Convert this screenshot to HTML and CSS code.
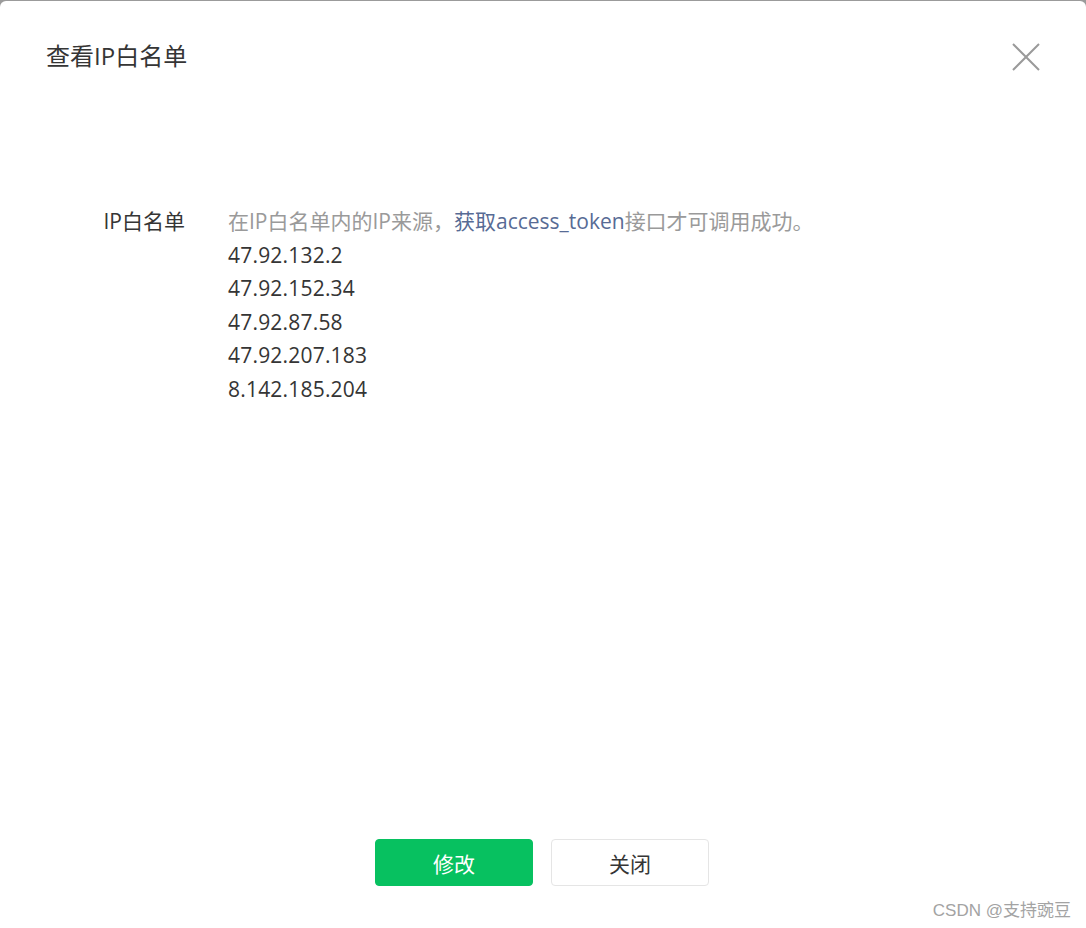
FILE: index.html
```html
<!DOCTYPE html>
<html lang="zh-CN">
<head>
<meta charset="utf-8">
<title>查看IP白名单</title>
<link rel="stylesheet" href="styles.css">
</head>
<body>
<div class="backdrop">
  <div class="dialog">
    <div class="header">
      <h3 class="title">查看IP白名单</h3>
      <button class="close" aria-label="关闭">
        <svg width="28" height="28" viewBox="0 0 28 28"><path d="M1 1L27 27M27 1L1 27" stroke="#9a9a9a" stroke-width="2" fill="none"/></svg>
      </button>
    </div>
    <div class="body">
      <div class="row">
        <div class="label">IP白名单</div>
        <div class="value">
          <p class="hint">在IP白名单内的IP来源，<a class="link" href="#">获取access_token</a>接口才可调用成功。</p>
          <p class="ip">47.92.132.2</p>
          <p class="ip">47.92.152.34</p>
          <p class="ip">47.92.87.58</p>
          <p class="ip">47.92.207.183</p>
          <p class="ip">8.142.185.204</p>
        </div>
      </div>
    </div>
    <div class="footer">
      <button class="btn btn-primary">修改</button>
      <button class="btn btn-default">关闭</button>
    </div>
  </div>
  <div class="watermark">CSDN @支持豌豆</div>
</div>
</body>
</html>
```

FILE: styles.css
```css
* { box-sizing: border-box; }
html, body { margin: 0; padding: 0; }
body {
  width: 1086px;
  height: 928px;
  overflow: hidden;
  background: #9b9b9b;
  font-family: "Open Sans", "Noto Sans CJK SC", sans-serif;
  color: #353535;
}
.backdrop {
  position: relative;
  height: 928px;
  padding-top: 1px;
}
.dialog {
  height: 927px;
  background: #fff;
  border-radius: 6px 6px 0 0;
  display: flex;
  flex-direction: column;
}
.header {
  display: flex;
  align-items: flex-start;
  justify-content: space-between;
  padding: 38px 46px 0 46px;
  height: 150px;
}
.title {
  margin: 0;
  font-size: 24px;
  font-weight: 400;
  line-height: 34px;
  color: #353535;
}
.close {
  border: 0;
  background: transparent;
  padding: 0;
  margin: 4px 0 0 0;
  width: 28px;
  height: 28px;
  cursor: pointer;
  display: block;
}
.close svg { display: block; }
.body {
  flex: 1;
  padding-top: 54px;
}
.row {
  display: flex;
  gap: 43px;
  font-size: 21px;
  line-height: 33.6px;
}
.label {
  width: 185px;
  text-align: right;
  color: #353535;
}
.value p { margin: 0; }
.hint { color: #9a9a9a; }
.link { color: #576b95; text-decoration: none; }
.ip { color: #353535; letter-spacing: 0.2px; }
.footer {
  display: flex;
  justify-content: center;
  gap: 18px;
  padding: 0 2px 42px 0;
}
.btn {
  width: 158px;
  height: 47px;
  border-radius: 4px;
  font-family: "Open Sans", "Noto Sans CJK SC", sans-serif;
  font-size: 21px;
  cursor: pointer;
  padding: 0;
}
.btn-primary {
  background: #07c160;
  border: 1px solid #07c160;
  color: #fff;
}
.btn-default {
  background: #fff;
  border: 1px solid #e5e5e5;
  color: #353535;
}
.watermark {
  position: absolute;
  right: 15px;
  bottom: 7px;
  font-family: "Liberation Sans", "Noto Sans CJK SC", sans-serif;
  font-size: 17px;
  color: #a3a3a3;
}
```
